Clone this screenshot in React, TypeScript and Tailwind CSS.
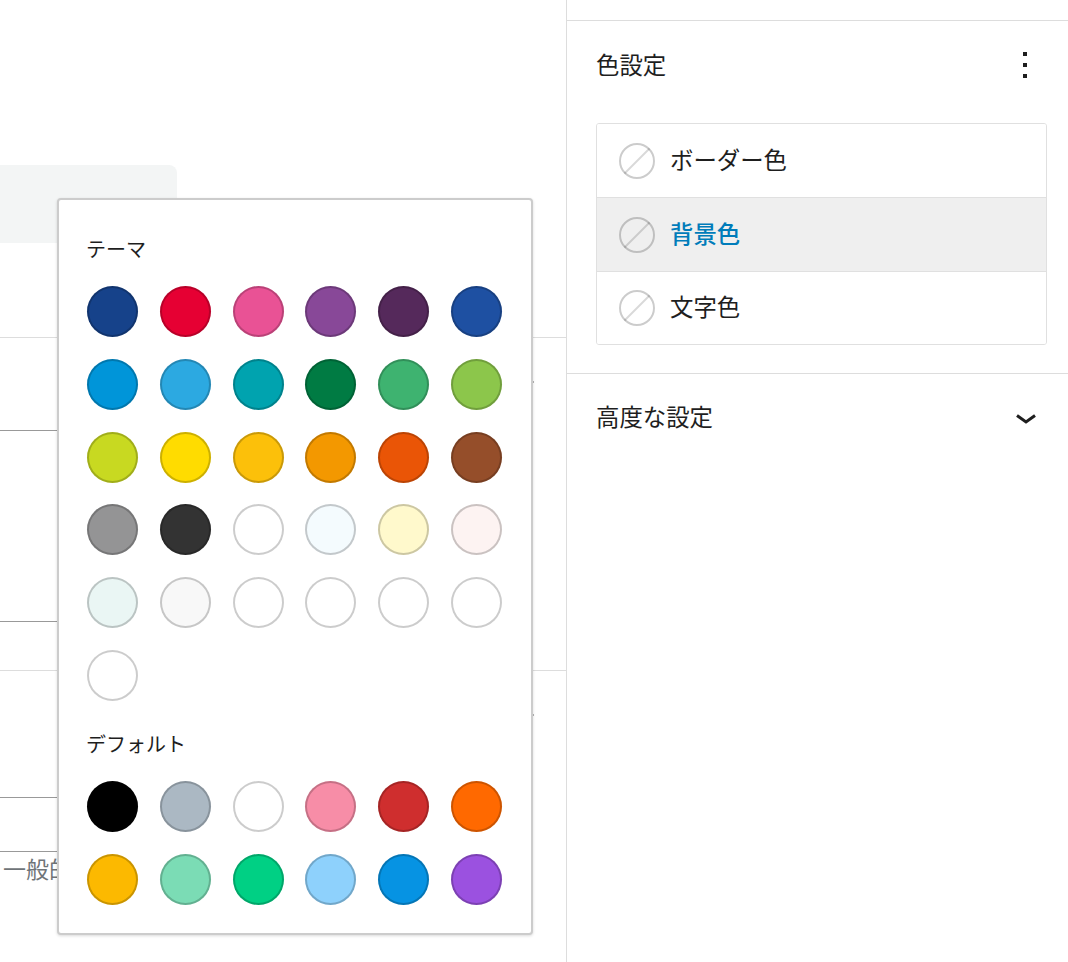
const themeColors = [
  "bg-[#16428a]", "bg-[#e60033]", "bg-[#e95295]", "bg-[#884898]", "bg-[#55295b]", "bg-[#1e50a2]",
  "bg-[#0095d9]", "bg-[#2ca9e1]", "bg-[#00a3af]", "bg-[#007b43]", "bg-[#3eb370]", "bg-[#8cc64b]",
  "bg-[#c8d921]", "bg-[#ffdc00]", "bg-[#fcc00a]", "bg-[#f39800]", "bg-[#ea5506]", "bg-[#954e2a]",
  "bg-[#949495]", "bg-[#333333]", "bg-white", "bg-[#f4fbfe]", "bg-[#fff9cc]", "bg-[#fdf3f2]",
  "bg-[#eaf6f4]", "bg-[#f8f8f8]", "bg-white", "bg-white", "bg-white", "bg-white",
  "bg-white",
];

const defaultColors = [
  "bg-black", "bg-[#abb8c3]", "bg-white", "bg-[#f78da7]", "bg-[#cf2e2e]", "bg-[#ff6900]",
  "bg-[#fcb900]", "bg-[#7bdcb5]", "bg-[#00d084]", "bg-[#8ed1fc]", "bg-[#0693e3]", "bg-[#9b51e0]",
];

const colorRows = [
  { label: "ボーダー色", active: false, height: "h-[73px]" },
  { label: "背景色", active: true, height: "h-[74px]" },
  { label: "文字色", active: false, height: "h-[73px]" },
];

function SwatchGrid({ colors }: { colors: string[] }) {
  return (
    <div className="grid grid-cols-[repeat(6,51px)] gap-[21.8px]">
      {colors.map((color, index) => (
        <div
          key={index}
          className={`h-[51px] w-[51px] rounded-full shadow-[inset_0_0_0_2px_rgba(0,0,0,0.2)] ${color}`}
        />
      ))}
    </div>
  );
}

function EmptySwatch() {
  return (
    <svg width="36" height="36" viewBox="0 0 36 36" className="shrink-0" fill="none">
      <circle cx="18" cy="18" r="17" stroke="#000000" strokeOpacity="0.2" strokeWidth="2" />
      <path d="M5.5 30.5 L30.5 5.5" stroke="#000000" strokeOpacity="0.15" strokeWidth="2" />
    </svg>
  );
}

function LeftContent() {
  return (
    <div className="h-full w-[566px] overflow-hidden">
      <div className="mt-[165px] h-[78px] w-[177px] rounded-tr-lg bg-[#f3f5f5]" />
      <div className="mt-[94px] h-px bg-[#dddddd]" />
      <div className="mt-[92px] h-px w-[57px] bg-[#999999]" />
      <div className="mt-[190px] h-px w-[57px] bg-[#999999]" />
      <div className="mt-[48px] h-px bg-[#dddddd]" />
      <div className="mt-[126px] h-px w-[57px] bg-[#999999]" />
      <div className="mt-[53px] h-px w-[57px] bg-[#999999]" />
      <p className="ml-[3px] mt-[-1px] whitespace-nowrap text-[23px] leading-[34px] text-[#6f7478]">一般的</p>
    </div>
  );
}

function ColorPopover() {
  return (
    <div className="absolute left-[57px] top-[198px] h-[737px] w-[476px] rounded-[4px] border-2 border-[#cccccc] bg-white pl-[28px] pt-[34px] shadow-[0_1px_3px_rgba(0,0,0,0.15)]">
      <p className="ml-[-1px] text-[20px] leading-[30px] text-[#1e1e1e]">テーマ</p>
      <div className="mt-[22px]">
        <SwatchGrid colors={themeColors} />
      </div>
      <p className="ml-[-1px] mt-[28px] text-[20px] leading-[30px] text-[#1e1e1e]">デフォルト</p>
      <div className="mt-[22px]">
        <SwatchGrid colors={defaultColors} />
      </div>
    </div>
  );
}

function Sidebar() {
  return (
    <div className="h-full flex-1 border-l border-[#dddddd] pt-5">
      <div className="border-y border-[#dddddd] pb-[28px] pl-[29px] pr-[21px]">
        <div className="flex h-[88px] items-center justify-between pb-[2px]">
          <h2 className="mt-[1px] text-[23.4px] font-normal text-[#1e1e1e]">色設定</h2>
          <svg width="8" height="30" viewBox="0 0 8 30" className="mr-[18px]" fill="#1e1e1e">
            <rect x="2" y="3" width="4" height="4" />
            <rect x="2" y="14" width="4" height="4" />
            <rect x="2" y="25" width="4" height="4" />
          </svg>
        </div>
        <div className="mt-[14px] overflow-hidden rounded-[3px] border border-[#e0e0e0]">
          {colorRows.map((row, index) => (
            <div
              key={row.label}
              className={`flex items-center gap-[15px] pl-[22px] ${row.height} ${index > 0 ? "border-t border-[#e0e0e0]" : ""} ${row.active ? "bg-[#efefef]" : "bg-white"}`}
            >
              <EmptySwatch />
              <span className={`mb-[2px] text-[23.4px] ${row.active ? "font-medium text-[#007cba]" : "text-[#1e1e1e]"}`}>
                {row.label}
              </span>
            </div>
          ))}
        </div>
      </div>
      <div className="flex h-[88px] items-center justify-between pl-[29px] pr-[21px]">
        <h2 className="mb-[2px] text-[23.4px] font-normal text-[#1e1e1e]">高度な設定</h2>
        <svg width="22" height="12" viewBox="0 0 22 12" className="mr-[10px] mt-[2px]" fill="none">
          <path d="M2 2.5 L11 9 L20 2.5" stroke="#1e1e1e" strokeWidth="3" />
        </svg>
      </div>
    </div>
  );
}

export default function App() {
  return (
    <div className="relative flex h-[962px] w-[1068px] overflow-hidden bg-white font-['Noto_Sans_CJK_JP','Noto_Sans',sans-serif]">
      <LeftContent />
      <Sidebar />
      <ColorPopover />
      <div className="absolute left-[533px] top-[381px] h-[2px] w-px bg-[#aaaaaa]" />
      <div className="absolute left-[533px] top-[714px] h-[2px] w-px bg-[#aaaaaa]" />
    </div>
  );
}
